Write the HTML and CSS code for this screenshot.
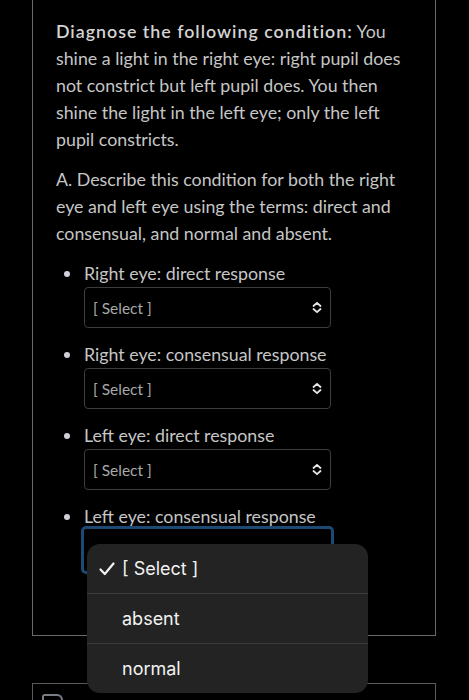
FILE: index.html
```html
<!DOCTYPE html>
<html>
<head>
<meta charset="utf-8">
<link rel="stylesheet" href="styles.css">
</head>
<body>
<div class="page">
  <div class="panel">
    <p class="para"><strong>Diagnose the following condition:</strong> You shine a light in the right eye: right pupil does not constrict but left pupil does. You then shine the light in the left eye; only the left pupil constricts.</p>
    <p class="para">A. Describe this condition for both the right eye and left eye using the terms: direct and consensual, and normal and absent.</p>
    <ul class="items">
      <li class="item">
        <div class="label">Right eye: direct response</div>
        <div class="select"><span>[ Select ]</span><svg class="chev" width="10" height="13" viewBox="0 0 10 13"><path d="M1.5 5 L5 1.8 L8.5 5 M1.5 8 L5 11.2 L8.5 8" fill="none" stroke="#e6e6e6" stroke-width="1.8" stroke-linecap="round" stroke-linejoin="round"/></svg></div>
      </li>
      <li class="item">
        <div class="label">Right eye: consensual response</div>
        <div class="select"><span>[ Select ]</span><svg class="chev" width="10" height="13" viewBox="0 0 10 13"><path d="M1.5 5 L5 1.8 L8.5 5 M1.5 8 L5 11.2 L8.5 8" fill="none" stroke="#e6e6e6" stroke-width="1.8" stroke-linecap="round" stroke-linejoin="round"/></svg></div>
      </li>
      <li class="item">
        <div class="label">Left eye: direct response</div>
        <div class="select"><span>[ Select ]</span><svg class="chev" width="10" height="13" viewBox="0 0 10 13"><path d="M1.5 5 L5 1.8 L8.5 5 M1.5 8 L5 11.2 L8.5 8" fill="none" stroke="#e6e6e6" stroke-width="1.8" stroke-linecap="round" stroke-linejoin="round"/></svg></div>
      </li>
      <li class="item">
        <div class="label">Left eye: consensual response</div>
        <div class="select focused"></div>
      </li>
    </ul>
  </div>
  <div class="next">
    <div class="next-icon"></div>
  </div>
  <div class="menu">
    <div class="opt"><svg class="check" width="16" height="14" viewBox="0 0 16 14"><path d="M1.5 7.5 L5.8 12 L14.5 1.5" fill="none" stroke="#f2f2f2" stroke-width="2.2" stroke-linecap="round" stroke-linejoin="round"/></svg><span>[ Select ]</span></div>
    <div class="opt"><span>absent</span></div>
    <div class="opt"><span>normal</span></div>
  </div>
</div>
</body>
</html>
```

FILE: styles.css
```css
html, body {
  margin: 0;
  padding: 0;
  background: #000;
}
body {
  font-family: Lato, "Open Sans", sans-serif;
  color: #c6c6c6;
}
.page {
  position: relative;
  width: 469px;
  height: 700px;
  overflow: hidden;
}
.panel {
  margin-left: 32px;
  width: 379px;
  border: 1px solid #6a6a6a;
  border-top: none;
  padding: 18px 0 48px 23px;
}
.para {
  margin: 0 0 13px 0;
  width: 350px;
  font-size: 17.8px;
  line-height: 27px;
}
.para strong {
  font-weight: 600;
  color: #d4d4d4;
  letter-spacing: 1px;
}
.items {
  list-style: none;
  margin: 0;
  padding: 0 0 0 28px;
}
.item {
  margin-bottom: 13px;
}
.label {
  position: relative;
  font-size: 17.8px;
  line-height: 27px;
}
.label::before {
  content: "";
  position: absolute;
  left: -20px;
  top: 11px;
  width: 6px;
  height: 6px;
  border-radius: 50%;
  background: #d0d0d8;
}
.select {
  box-sizing: border-box;
  width: 247px;
  height: 41px;
  border: 1px solid #3d3d3d;
  border-radius: 4px;
  display: flex;
  align-items: center;
  justify-content: space-between;
  padding: 0 8px 0 8px;
  font-size: 15.5px;
  color: #a8a8a8;
}
.chev {
  display: block;
}
.select.focused {
  border: 3px solid #1d4a75;
  border-radius: 5px;
  width: 253px;
  margin-left: -3px;
  margin-top: -4px;
  height: 48px;
}
.next {
  margin: 47px 0 0 32px;
  width: 402px;
  height: 30px;
  border: 1px solid #5a5a5a;
  border-bottom: none;
}
.next-icon {
  margin: 10px 0 0 9px;
  width: 17px;
  height: 20px;
  border: 2px solid #7a7f87;
  border-bottom: none;
  border-radius: 3px 6px 0 0;
}
.menu {
  position: absolute;
  left: 87px;
  top: 544px;
  width: 281px;
  background: #232323;
  border-radius: 13px;
  overflow: hidden;
  font-family: Inter, Roboto, sans-serif;
  color: #f2f2f2;
  font-size: 18px;
}
.opt {
  position: relative;
  height: 49px;
  display: flex;
  align-items: center;
  padding-left: 35px;
  border-top: 1px solid #3a3a3a;
}
.opt:first-child {
  border-top: none;
}
.check {
  position: absolute;
  left: 12px;
  top: 18px;
}
```
